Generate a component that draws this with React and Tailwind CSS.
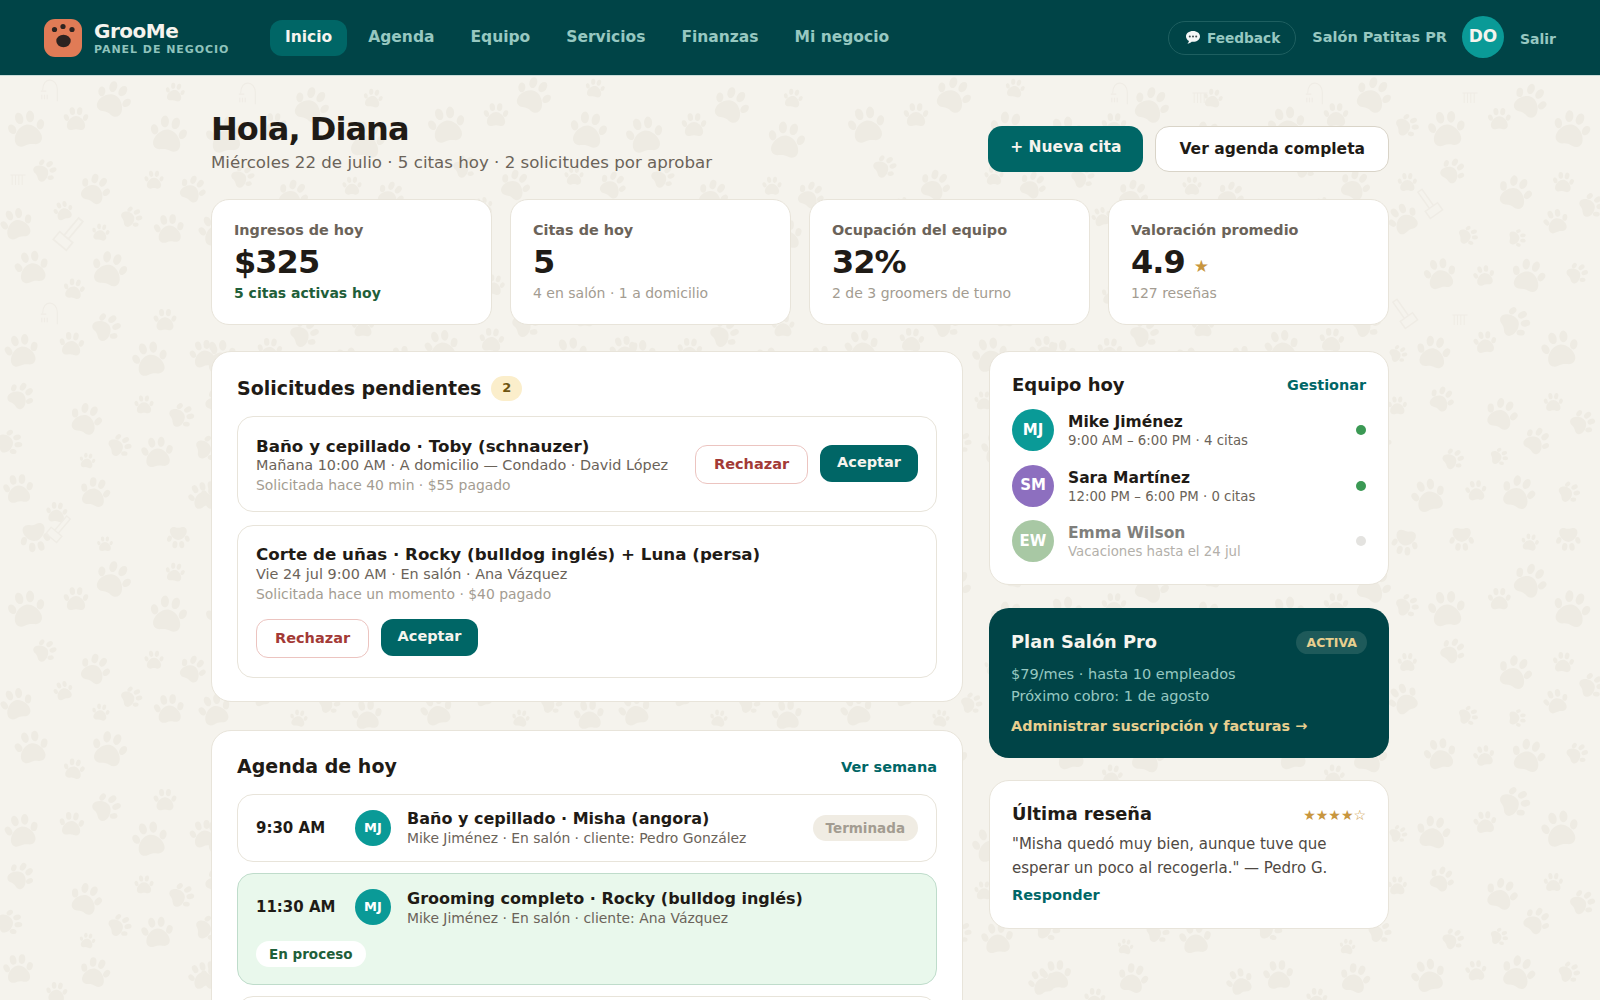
const leftPaws = [
  [340,75,100,25],[525,55,55,10],[80,165,105,-10],[228,135,70,0],[505,180,105,10],[135,290,65,60],
  [285,345,85,25],[462,318,55,0],[578,345,75,30],[50,450,90,-15],[190,410,55,-15],[395,430,60,70],
  [507,465,85,-5],[302,475,50,10],[95,580,95,-10],[328,585,100,15],[222,645,60,10],[495,738,65,0],
  [320,760,80,60],[65,830,95,-10],[215,810,70,5],[450,855,100,-10],[612,840,80,-10],[62,965,75,40],
  [432,992,55,0],[258,1035,90,20],[545,1025,70,70],[30,1105,70,80],[360,1115,65,70],[472,1135,90,-5],
  [262,1160,45,10],[55,1245,85,-5],[285,1255,85,15],[170,1315,60,5],[605,1265,75,-20],[105,1390,85,170],
  [535,1390,65,180],[315,1410,45,0],
];
const rightPaws = [
  [420,80,95,30],[170,165,105,-5],[545,165,105,15],[52,155,65,75],[328,135,65,0],[188,290,70,40],
  [375,355,95,20],[520,325,60,5],[52,325,55,0],[40,435,85,-30],[498,442,70,-15],[605,395,70,70],
  [235,485,55,80],[382,492,50,90],[150,600,90,-10],[282,605,60,-10],[415,605,95,15],[562,598,60,60],
  [375,745,85,70],[285,805,65,-5],[130,835,95,10],[510,825,105,-10],[25,840,50,70],[155,975,70,30],
  [490,985,55,0],[335,1020,90,20],[578,1045,70,60],[22,995,55,0],[440,1100,75,40],[190,1155,60,60],
  [328,1148,50,80],[115,1265,95,-15],[258,1250,60,-5],[385,1255,95,20],[538,1255,60,70],[45,1405,75,190],
  [420,1405,50,10],[535,1395,70,180],[215,1395,70,180],
];

// zoom coords are 3x, strip starts under the header
function place(list, dx, dy = 0) {
  return list.map(([x, y, s, r]) => [x / 3 + dx, y / 3 + 74 + dy, s / 3, r]);
}

const pawList = [
  ...place(leftPaws, 0),
  ...[1, 2, 3, 4, 5, 6].flatMap((k) => place(leftPaws, 210 * k - 12 * (k % 2), k % 2 ? 6 : -4)).filter((p) => p[0] < 1385),
  ...place(rightPaws, 1390),
  ...place(leftPaws, 0, 480),
  ...place(rightPaws, 1390, 480),
  ...[1, 2, 3, 4, 5, 6].flatMap((k) => place(leftPaws, 210 * k - 12 * (k % 2), 486)).filter((p) => p[0] < 1385),
];

const tools = [
  ["shower", 50, 92, 22, 0], ["shower", 50, 315, 22, 0], ["shower", 248, 95, 22, 0], ["shower", 1120, 95, 22, 0], ["shower", 1315, 95, 22, 0],
  ["brush", 68, 235, 34, 40], ["brush", 58, 530, 28, 40], ["brush", 1430, 205, 30, -35], ["brush", 1405, 315, 30, -35],
  ["comb", 18, 180, 20, 0], ["comb", 1470, 98, 20, 0], ["comb", 1460, 320, 20, 0], ["comb", 1200, 98, 20, 0],
];

function PawBackground() {
  return (
    <svg className="absolute inset-0 w-full h-full pointer-events-none" width="1600" height="1000">
      <defs>
        <g id="paw">
          <path d="M50 38c-17 0-35 18-37 36-2 16 11 24 24 20 9-3 17-3 26 0 13 4 26-4 24-20-2-18-20-36-37-36z" />
          <ellipse cx="11" cy="44" rx="10" ry="14" transform="rotate(-22 11 44)" />
          <ellipse cx="35" cy="18" rx="11" ry="16" transform="rotate(-8 35 18)" />
          <ellipse cx="65" cy="18" rx="11" ry="16" transform="rotate(8 65 18)" />
          <ellipse cx="89" cy="44" rx="10" ry="14" transform="rotate(22 89 44)" />
        </g>
      </defs>
      <g fill="#eeebe3">
        {pawList.map(([x, y, s, r], i) => (
          <g key={i} transform={`translate(${x} ${y}) rotate(${r}) scale(${(s / 100) * 1.05})`}>
            <use href="#paw" x="-50" y="-50" />
          </g>
        ))}
      </g>
      <g fill="none" stroke="#efece5" strokeWidth="1.2">
        {tools.map(([kind, x, y, s, r], i) => (
          <g key={i} transform={`translate(${x} ${y}) rotate(${r}) scale(${s / 24})`}>
            {kind === "shower" && <path d="M-8 -2c0-8 4-11 8-11s8 4 8 10v13M-10 -1h6M-9 3v5M-6 3v5M-3 3v5" />}
            {kind === "brush" && <path d="M-2 -14h4v16h-4zM-6 2h12v7h-12z" />}
            {kind === "comb" && <path d="M-9 -6h18M-7 -6v12M-3 -6v12M1 -6v12M5 -6v12" />}
          </g>
        ))}
      </g>
    </svg>
  );
}

function Logo() {
  return (
    <svg width="38" height="38" viewBox="0 0 38 38" className="shrink-0">
      <rect x="0" y="0" width="38" height="38" rx="11" fill="#e07b56" />
      <circle cx="10.5" cy="10.5" r="2.6" fill="#2c2320" />
      <circle cx="19" cy="7.5" r="2.6" fill="#2c2320" />
      <circle cx="28" cy="10.5" r="2.6" fill="#2c2320" />
      <ellipse cx="19.5" cy="22" rx="7.2" ry="6.2" fill="#2c2320" />
    </svg>
  );
}

function Bubble() {
  return (
    <svg width="16" height="15" viewBox="0 0 16 15">
      <path d="M8 1C4 1 1 3.4 1 6.4c0 1.900 1.200 3.500 3 4.500-.2 1.100-.8 2-1.600 2.700 1.700-.1 3.200-.8 4.300-1.900.4 0 .9.1 1.300.1 4 0 7-2.400 7-5.400S12 1 8 1z" fill="#f4f7f7" />
      <circle cx="4.800" cy="6.400" r="1" fill="#3b4a4c" />
      <circle cx="8" cy="6.400" r="1" fill="#3b4a4c" />
      <circle cx="11.200" cy="6.400" r="1" fill="#3b4a4c" />
    </svg>
  );
}

function Header() {
  return (
    <header className="relative h-[76px] bg-[#004447] border-b border-[#c9dcd9] flex items-center pl-11 pr-[44px]">
      <Logo />
      <div className="ml-3 w-[137px] mt-[2px]">
        <div className="text-[20px] leading-[22px] font-bold tracking-[-0.5px] text-[#f6f4ee]">GrooMe</div>
        <div className="text-[11px] leading-[14px] mt-[1px] font-bold tracking-[0.95px] text-[#8fc3bc]">PANEL DE NEGOCIO</div>
      </div>
      <nav className="ml-[39px] flex items-center gap-[6px] text-[15.500px] font-bold text-[#97c8c1]">
        <span className="h-[36px] leading-[34px] px-[15px] rounded-[12px] bg-[#006666] text-[#f6f4ee]">Inicio</span>
        {["Agenda", "Equipo", "Servicios", "Finanzas", "Mi negocio"].map((n) => (
          <span key={n} className="px-[15px]">{n}</span>
        ))}
      </nav>
      <div className="ml-auto flex items-center">
        <div className="h-[34px] flex items-center gap-[6px] pl-4 pr-[15px] rounded-full border border-[#1e5f60] text-[13.700px] leading-[36px] font-bold text-[#97c8c1]">
          <Bubble />
          Feedback
        </div>
        <div className="ml-4 text-[14.500px] font-bold text-[#97c8c1]">Salón Patitas PR</div>
        <div className="ml-[15px] w-[42px] h-[42px] rounded-full bg-[#0a9a97] text-[#f6f4ee] text-[17px] font-bold flex items-center justify-center -mt-[1px]">DO</div>
        <div className="ml-4 text-[14px] font-bold text-[#97c8c1] mt-[3px]">Salir</div>
      </div>
    </header>
  );
}

function Stat({ label, value, sub, subClass, star }) {
  return (
    <div className="h-[126px] rounded-[18px] bg-white border border-[#e8e4da] pl-[22px] pt-[20px]">
      <div className="text-[14.400px] leading-[20px] -mt-[0.500px] font-bold text-[#6b6359]">{label}</div>
      <div className="h-[38px] text-[32px] leading-[38px] font-bold tracking-[-0.96px] text-[#1f1b16] mt-[3px] flex items-center">
        {value}
        {star && <span className="ml-[9px] text-[17px] tracking-normal text-[#c8963e] mt-[8px]">★</span>}
      </div>
      <div className={"text-[14px] leading-[20px] mt-[2.500px] " + subClass}>{sub}</div>
    </div>
  );
}

function Rechazar() {
  return <span className="h-[39px] leading-[36px] px-[18px] rounded-[12px] border border-[#ecc4c0] bg-white text-[#a33a36] text-[14.500px] font-bold">Rechazar</span>;
}

function Aceptar() {
  return <span className="h-[37px] leading-[34px] px-[17px] rounded-[12px] bg-[#006666] text-[#f6f4ee] text-[14.500px] font-bold">Aceptar</span>;
}

function Requests() {
  return (
    <section className="h-[351px] rounded-[20px] bg-white border border-[#e8e4da] pt-[22px] px-[25px]">
      <div className="flex items-center gap-[10px] h-[28px]">
        <h2 className="text-[19px] font-bold text-[#1f1b16]">Solicitudes pendientes</h2>
        <span className="w-[31px] h-[25px] rounded-full bg-[#fbeecb] text-[#6e5512] text-[13px] font-bold flex items-center justify-center">2</span>
      </div>
      <div className="mt-[14px] h-[96px] rounded-[16px] border border-[#e8e4da] pl-[18px] pr-[18px] flex items-center">
        <div className="flex-1 mt-[2px]">
          <div className="text-[16.700px] leading-[20px] font-bold text-[#1f1b16]">Baño y cepillado · Toby (schnauzer)</div>
          <div className="text-[14.400px] leading-[19px] text-[#6b6359]">Mañana 10:00 AM · A domicilio — Condado · David López</div>
          <div className="text-[13.900px] leading-[20px] text-[#a39c91]">Solicitada hace 40 min · $55 pagado</div>
        </div>
        <div className="flex items-start gap-[12px] mt-[1.500px]">
          <Rechazar />
          <Aceptar />
        </div>
      </div>
      <div className="mt-[13px] h-[153px] rounded-[16px] border border-[#e8e4da] pl-[18px] pt-[18px]">
        <div className="text-[16.700px] leading-[20px] font-bold text-[#1f1b16]">Corte de uñas · Rocky (bulldog inglés) + Luna (persa)</div>
        <div className="text-[14.400px] leading-[19px] mt-[1px] text-[#6b6359]">Vie 24 jul 9:00 AM · En salón · Ana Vázquez</div>
        <div className="text-[13.900px] leading-[20px] text-[#a39c91]">Solicitada hace un momento · $40 pagado</div>
        <div className="flex items-start gap-[11.500px] mt-[15px]">
          <Rechazar />
          <Aceptar />
        </div>
      </div>
    </section>
  );
}

function Avatar({ text, bg, size }) {
  const cls = size === "lg" ? "w-[42px] h-[42px] text-[15px]" : "w-[36px] h-[36px] text-[13px]";
  return <div className={"rounded-full shrink-0 flex items-center justify-center font-bold text-white " + cls + " " + bg}>{text}</div>;
}

function Agenda() {
  return (
    <section className="mt-[28px] h-[400px] rounded-[20px] bg-white border border-[#e8e4da] pt-[23px] px-[25px]">
      <div className="flex items-center justify-between h-[24px]">
        <h2 className="text-[19px] font-bold text-[#1f1b16]">Agenda de hoy</h2>
        <span className="text-[14.500px] font-bold text-[#006666] mt-[4px]">Ver semana</span>
      </div>
      <div className="mt-[16px] h-[68px] rounded-[16px] border border-[#e8e4da] px-[18px] flex items-center">
        <span className="w-[99px] text-[15px] font-bold text-[#1f1b16]">9:30 AM</span>
        <Avatar text="MJ" bg="bg-[#0a9a97]" />
        <div className="ml-[16px] flex-1 -mt-[2px]">
          <div className="text-[16px] leading-[21px] font-bold text-[#1f1b16]">Baño y cepillado · Misha (angora)</div>
          <div className="text-[13.900px] leading-[18px] text-[#6b6359]">Mike Jiménez · En salón · cliente: Pedro González</div>
        </div>
        <span className="h-[26px] leading-[26px] px-[13px] rounded-full bg-[#f0ece3] text-[#a39c91] text-[13.500px] font-bold">Terminada</span>
      </div>
      <div className="mt-[11px] h-[112px] rounded-[16px] border border-[#bfdccb] bg-[#e9f8ec] px-[18px] pt-[13.500px]">
        <div className="flex items-center">
          <span className="w-[99px] text-[15px] font-bold text-[#1f1b16]">11:30 AM</span>
          <Avatar text="MJ" bg="bg-[#0a9a97]" />
          <div className="ml-[16px] flex-1">
            <div className="text-[16px] leading-[21px] font-bold text-[#1f1b16]">Grooming completo · Rocky (bulldog inglés)</div>
            <div className="text-[13.900px] leading-[18px] text-[#6b6359]">Mike Jiménez · En salón · cliente: Ana Vázquez</div>
          </div>
        </div>
        <span className="inline-block mt-[14px] h-[26px] leading-[26px] px-[13px] rounded-full bg-white text-[#1f5f3a] text-[13.500px] font-bold">En proceso</span>
      </div>
      <div className="mt-[11px] h-[69px] rounded-[16px] border border-[#e8e4da]" />
    </section>
  );
}

function Member({ initials, bg, name, info, dot, dim }) {
  return (
    <div className="flex items-center h-[42px]">
      <Avatar text={initials} bg={bg} size="lg" />
      <div className="ml-[14px] flex-1 mt-[1px]">
        <div className={"text-[15.500px] leading-[20px] font-bold " + (dim ? "text-[#7f7f7c]" : "text-[#1f1b16]")}>{name}</div>
        <div className={"text-[13.300px] leading-[17px] " + (dim ? "text-[#b3b0aa]" : "text-[#6b6359]")}>{info}</div>
      </div>
      <span className={"w-[10px] h-[10px] rounded-full " + dot} />
    </div>
  );
}

function Sidebar() {
  return (
    <aside className="w-[400px] shrink-0">
      <section className="h-[234px] rounded-[20px] bg-white border border-[#e8e4da] pt-[20px] pl-[22px] pr-[22px]">
        <div className="flex items-center justify-between h-[24px]">
          <h2 className="text-[18px] font-bold text-[#1f1b16]">Equipo hoy</h2>
          <span className="text-[14.400px] font-bold text-[#006666] mt-[4px]">Gestionar</span>
        </div>
        <div className="mt-[13px] flex flex-col gap-[13.500px]">
          <Member initials="MJ" bg="bg-[#0a9a97]" name="Mike Jiménez" info="9:00 AM – 6:00 PM · 4 citas" dot="bg-[#3b9954]" />
          <Member initials="SM" bg="bg-[#8d6fbf]" name="Sara Martínez" info="12:00 PM – 6:00 PM · 0 citas" dot="bg-[#3b9954]" />
          <Member initials="EW" bg="bg-[#a8c8a4]" name="Emma Wilson" info="Vacaciones hasta el 24 jul" dot="bg-[#e4e3e0]" dim />
        </div>
      </section>
      <section className="mt-[23px] h-[150px] rounded-[20px] bg-[#004447] pt-[21px] pl-[22px] pr-[22px]">
        <div className="flex items-center justify-between">
          <h2 className="text-[17.800px] leading-[26px] font-bold text-[#f6f4ee]">Plan Salón Pro</h2>
          <span className="h-[23px] leading-[23px] px-[10px] rounded-full bg-[#1e5a5a] text-[#e8cf8f] text-[12.500px] font-bold">ACTIVA</span>
        </div>
        <div className="mt-[8px] text-[14.500px] leading-[22px] text-[#97c8c1]">
          $79/mes · hasta 10 empleados
          <br />
          Próximo cobro: 1 de agosto
        </div>
        <div className="mt-[9px] text-[14.400px] font-bold text-[#e8cf8f]">Administrar suscripción y facturas →</div>
      </section>
      <section className="mt-[22px] h-[149px] rounded-[20px] bg-white border border-[#e8e4da] pt-[21px] pl-[22px] pr-[22px]">
        <div className="flex items-center justify-between h-[24px]">
          <h2 className="text-[17.800px] font-bold text-[#1f1b16]">Última reseña</h2>
          <span className="text-[14px] text-[#c8963e] mt-[2px] -ml-[2px]">★★★★☆</span>
        </div>
        <p className="mt-[7px] text-[15px] leading-[23.500px] text-[#4f4943]">"Misha quedó muy bien, aunque tuve que esperar un poco al recogerla." — Pedro G.</p>
        <div className="mt-[5px] text-[14.500px] font-bold text-[#006666]">Responder</div>
      </section>
    </aside>
  );
}

export default function App() {
  return (
    <div className="relative h-screen overflow-hidden bg-[#f5f3ed] font-['DejaVu_Sans','Liberation_Sans',sans-serif]">
      <PawBackground />
      <Header />
      <main className="relative w-[1178px] mx-auto pt-[29px]">
        <div className="flex items-start justify-between h-[94px]">
          <div className="mt-[1.500px]">
            <h1 className="text-[32px] leading-[44px] font-bold tracking-[-0.96px] text-[#1f1b16]">Hola, Diana</h1>
            <p className="text-[16.650px] leading-[22px] mt-[1px] text-[#6b6359]">Miércoles 22 de julio · 5 citas hoy · 2 solicitudes por aprobar</p>
          </div>
          <div className="flex gap-[12px] mt-[21px]">
            <span className="h-[46px] leading-[42px] px-[22px] rounded-[14px] bg-[#006666] text-[#f6f4ee] text-[15.500px] font-bold">+ Nueva cita</span>
            <span className="h-[46px] leading-[44px] px-[23px] rounded-[14px] bg-white border border-[#d9d4c8] text-[#1f1b16] text-[15.500px] font-bold">Ver agenda completa</span>
          </div>
        </div>
        <div className="grid grid-cols-4 gap-[18px]">
          <Stat label="Ingresos de hoy" value="$325" sub="5 citas activas hoy" subClass="font-bold text-[#1f5f3a] text-[13.800px]" />
          <Stat label="Citas de hoy" value="5" sub="4 en salón · 1 a domicilio" subClass="text-[#a39c91]" />
          <Stat label="Ocupación del equipo" value="32%" sub="2 de 3 groomers de turno" subClass="text-[#a39c91]" />
          <Stat label="Valoración promedio" value="4.9" star sub="127 reseñas" subClass="text-[#a39c91]" />
        </div>
        <div className="mt-[26px] flex gap-[26px]">
          <div className="flex-1">
            <Requests />
            <Agenda />
          </div>
          <Sidebar />
        </div>
      </main>
    </div>
  );
}
